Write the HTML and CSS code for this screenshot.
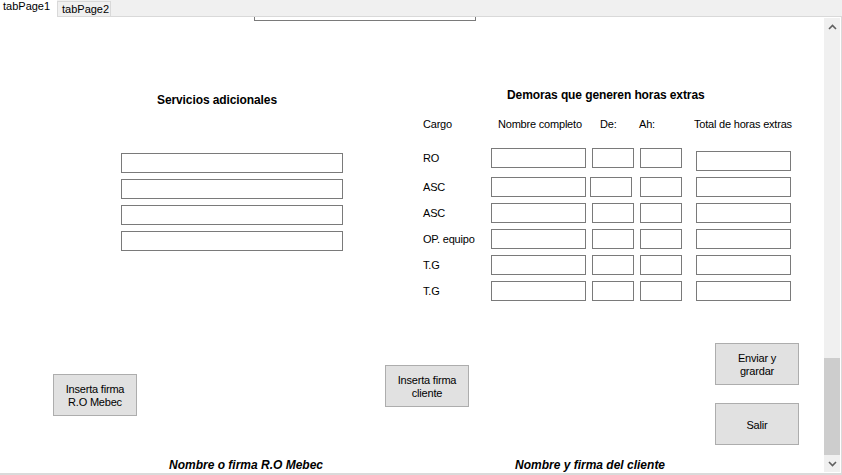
FILE: index.html
```html
<!DOCTYPE html>
<html lang="es">
<head>
<meta charset="utf-8">
<title>tabPage1</title>
<link rel="stylesheet" href="styles.css">
</head>
<body>
<div class="tabstrip">
  <div class="tab tab-active">tabPage1</div>
  <div class="tab tab-idle">tabPage2</div>
  <div class="tab-fill"></div>
</div>
<div class="panel">
  <div class="content">
    <div class="stub"></div>
    <div class="main">
      <section class="services">
        <h2 class="heading services-heading">Servicios adicionales</h2>
        <div class="service-list">
          <div class="field"></div>
          <div class="field"></div>
          <div class="field"></div>
          <div class="field"></div>
        </div>
      </section>
      <section class="delays">
        <h2 class="heading delays-heading">Demoras que generen horas extras</h2>
        <div class="thead">
          <div class="th">Cargo</div>
          <div class="th th-name">Nombre completo</div>
          <div class="th th-from">De:</div>
          <div class="th th-to">Ah:</div>
          <div class="th th-total">Total de horas extras</div>
        </div>
        <div class="tbody">
          <div class="row row-first">
            <div class="cell-label">RO</div>
            <div class="field f-name"></div>
            <div class="field f-small"></div>
            <div class="field f-small"></div>
            <div class="field f-name f-total-low"></div>
          </div>
          <div class="row">
            <div class="cell-label">ASC</div>
            <div class="field f-name"></div>
            <div class="field f-small f-shift"></div>
            <div class="field f-small"></div>
            <div class="field f-name"></div>
          </div>
          <div class="row">
            <div class="cell-label">ASC</div>
            <div class="field f-name"></div>
            <div class="field f-small"></div>
            <div class="field f-small"></div>
            <div class="field f-name"></div>
          </div>
          <div class="row">
            <div class="cell-label">OP. equipo</div>
            <div class="field f-name"></div>
            <div class="field f-small"></div>
            <div class="field f-small"></div>
            <div class="field f-name"></div>
          </div>
          <div class="row">
            <div class="cell-label">T.G</div>
            <div class="field f-name"></div>
            <div class="field f-small"></div>
            <div class="field f-small"></div>
            <div class="field f-name"></div>
          </div>
          <div class="row">
            <div class="cell-label">T.G</div>
            <div class="field f-name"></div>
            <div class="field f-small"></div>
            <div class="field f-small"></div>
            <div class="field f-name"></div>
          </div>
        </div>
      </section>
    </div>
    <div class="actions">
      <div class="act act-left"><div class="btn">Inserta firma<br>R.O Mebec</div></div>
      <div class="act act-mid"><div class="btn">Inserta firma<br>cliente</div></div>
      <div class="act act-right">
        <div class="btn">Enviar y<br>grardar</div>
        <div class="btn">Salir</div>
      </div>
    </div>
    <div class="signatures">
      <div class="sig sig-left">Nombre o firma R.O Mebec</div>
      <div class="sig">Nombre y firma del cliente</div>
    </div>
  </div>
  <div class="scrollbar">
    <div class="sb-btn">
      <svg width="9" height="6" viewBox="0 0 9 6"><path d="M1 5 L4.5 1.5 L8 5" fill="none" stroke="#606060" stroke-width="1.6"/></svg>
    </div>
    <div class="sb-track"><div class="sb-thumb"></div></div>
    <div class="sb-btn">
      <svg width="9" height="6" viewBox="0 0 9 6"><path d="M1 1 L4.5 4.5 L8 1" fill="none" stroke="#606060" stroke-width="1.6"/></svg>
    </div>
  </div>
</div>
</body>
</html>
```

FILE: styles.css
```css
* { box-sizing: border-box; }

html, body {
  margin: 0;
  padding: 0;
}

body {
  width: 842px;
  height: 475px;
  overflow: hidden;
  background: #ffffff;
  color: #000000;
  font-family: "Liberation Sans", Arial, sans-serif;
  font-size: 11px;
  line-height: 13px;
}

/* tab strip */
.tabstrip {
  display: flex;
  height: 17px;
  background: #f0f0f0;
}

.tab {
  font-size: 11px;
  line-height: 11px;
  white-space: nowrap;
}

.tab-active {
  width: 57px;
  height: 17px;
  padding: 1px 0 0 3px;
  background: #ffffff;
}

.tab-idle {
  width: 54px;
  height: 16px;
  margin-top: 1px;
  padding: 2px 0 0 4px;
  background: #f0f0f0;
  border: 1px solid #d9d9d9;
}

.tab-fill {
  flex: 1;
  height: 17px;
  border-bottom: 1px solid #d9d9d9;
}

/* panel */
.panel {
  display: flex;
  height: 458px;
  border-bottom: 2px solid #dadada;
  border-right: 1px solid #dadada;
}

.content {
  flex: 0 0 824px;
  width: 824px;
  overflow: hidden;
}

.stub {
  width: 222px;
  height: 4px;
  margin-left: 254px;
  border: 1px solid #7a7a7a;
  border-top: none;
}

.field {
  height: 20px;
  background: #ffffff;
  border: 1px solid #7a7a7a;
}

.heading {
  margin: 0;
  font-size: 12px;
  line-height: 14px;
  font-weight: bold;
  white-space: nowrap;
}

.main {
  display: flex;
  align-items: flex-start;
  margin-top: 67px;
}

.services {
  width: 222px;
  margin-left: 121px;
}

.services-heading {
  margin: 5px 0 0 36px;
  letter-spacing: -0.1px;
}

.service-list {
  display: flex;
  flex-direction: column;
  gap: 6px;
  margin-top: 46px;
}

.delays {
  margin-left: 80px;
}

.delays-heading {
  margin-left: 84px;
  letter-spacing: -0.1px;
}

.thead,
.row {
  display: grid;
  grid-template-columns: 68px 101px 48px 56px 95px;
  align-items: start;
}

.thead {
  margin-top: 16px;
  letter-spacing: -0.2px;
  white-space: nowrap;
}

.th-name { padding-left: 7px; }
.th-from { padding-left: 8px; }
.th-to { margin-left: -1px; }
.th-total { margin-left: -2px; }

.tbody {
  display: flex;
  flex-direction: column;
  gap: 6px;
  margin-top: 17px;
}

.cell-label {
  align-self: center;
  white-space: nowrap;
  letter-spacing: -0.2px;
}

.row-first .cell-label {
  align-self: start;
  padding-top: 4px;
}

.f-name { width: 95px; }
.f-small { width: 42px; }
.f-shift { margin-left: -2px; }
.f-total-low { margin-top: 3px; }

/* buttons */
.actions {
  display: flex;
  align-items: flex-start;
  margin-top: 42px;
}

.btn {
  display: flex;
  align-items: center;
  justify-content: center;
  width: 84px;
  height: 42px;
  padding-top: 2px;
  text-align: center;
  background: #e1e1e1;
  border: 1px solid #adadad;
  letter-spacing: -0.2px;
}

.act-left {
  margin-left: 53px;
  margin-top: 31px;
}

.act-mid {
  margin-left: 248px;
  margin-top: 22px;
}

.act-right {
  display: flex;
  flex-direction: column;
  gap: 18px;
  margin-left: 246px;
}

/* signatures */
.signatures {
  display: flex;
  margin-top: 13px;
  font-size: 12px;
  line-height: 14px;
  font-weight: bold;
  font-style: italic;
  white-space: nowrap;
}

.sig-left {
  width: 346px;
  margin-left: 169px;
}

/* scrollbar */
.scrollbar {
  display: flex;
  flex-direction: column;
  width: 16px;
  margin: 1px 1px 1px 0;
  background: #f0f0f0;
}

.sb-btn {
  display: flex;
  align-items: center;
  justify-content: center;
  height: 17px;
}

.sb-track {
  flex: 1;
  display: flex;
  flex-direction: column;
  justify-content: flex-end;
}

.sb-thumb {
  height: 97px;
  background: #cdcdcd;
}
```
